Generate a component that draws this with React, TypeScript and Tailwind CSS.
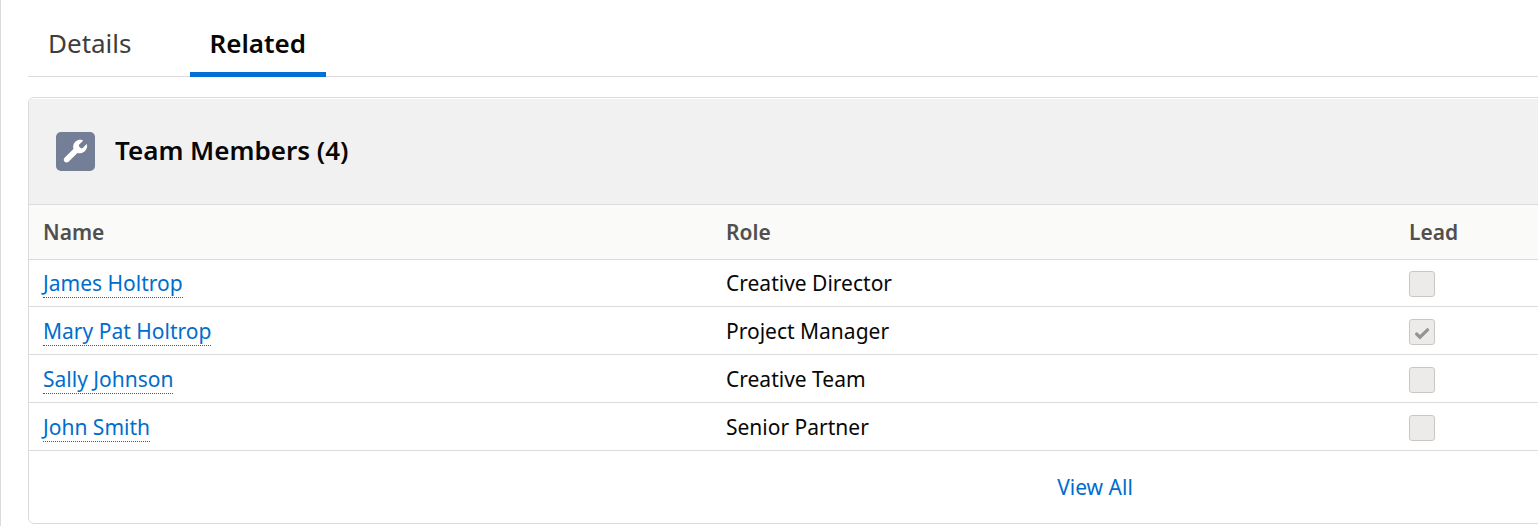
type Member = { name: string; role: string; lead: boolean };

const members: Member[] = [
  { name: 'James Holtrop', role: 'Creative Director', lead: false },
  { name: 'Mary Pat Holtrop', role: 'Project Manager', lead: true },
  { name: 'Sally Johnson', role: 'Creative Team', lead: false },
  { name: 'John Smith', role: 'Senior Partner', lead: false },
];

function WrenchIcon() {
  return (
    <span className="flex size-[39px] shrink-0 items-center justify-center rounded-[5px] bg-[#747e96]">
      <svg viewBox="0 0 39 39" className="size-full" aria-hidden="true">
        <path
          fill="#fff"
          d="M26.600 8.200C22.400 6.700 17.700 9.600 17.200 14c-.1 1 0 2 .2 2.900L8.600 25.700c-1.100 1.100-1.100 2.900 0 4s2.900 1.100 4 0l8.800-8.800c.9.3 1.900.4 2.900.3 4.400-.3 7.500-4.600 6.700-8.500-.1-.5-.6-.6-.9-.2l-3.100 3.300c-.7.7-1.900.7-2.600 0l-.9-.9c-.7-.7-.7-1.900 0-2.600l3.300-3.200c.3-.3.2-.8-.2-.9Z"
        />
      </svg>
    </span>
  );
}

function LeadCheckbox({ member }: { member: Member }) {
  return (
    <span className="relative mt-0.5 block size-[26px]">
      <input
        type="checkbox"
        aria-label={`${member.name} is lead`}
        checked={member.lead}
        disabled
        readOnly
        className="block size-full appearance-none rounded-[3px] border border-[#c9c7c5] bg-[#ecebea]"
      />
      {member.lead && (
        <svg viewBox="0 0 26 26" className="pointer-events-none absolute inset-0" aria-hidden="true">
          <path d="M7.600 15l3.400 3.200L18.500 10.800" fill="none" stroke="#969492" strokeWidth="3.200" strokeLinecap="round" />
        </svg>
      )}
    </span>
  );
}

export default function App() {
  return (
    <div className="min-h-screen overflow-x-hidden border-l border-[#dddbda] bg-white pl-[27px] font-['Noto_Sans','Open_Sans',sans-serif] text-[21px] leading-7 text-[#080707]">
      <div className="-mr-[624px] pb-[2px]">
        <div role="tablist" className="flex h-[77px] gap-[38px] border-b border-[#dddbda] text-[26px]">
          <button role="tab" aria-selected="false" className="px-5 pt-2.5 text-[#3e3e3c]">
            Details
          </button>
          <button
            role="tab"
            aria-selected="true"
            className="-mb-px border-b-[5px] border-[#0070d2] px-5 pt-3.5 font-semibold"
          >
            Related
          </button>
        </div>

        <section className="mt-5 overflow-hidden rounded-md border border-[#dddbda]">
          <header className="flex h-[106px] items-center gap-5 border-t border-white bg-[#f1f1f1] px-[27px]">
            <WrenchIcon />
            <h2 className="pb-1 text-[26px] font-semibold">Team Members (4)</h2>
          </header>

          <table className="w-full table-fixed border-separate border-spacing-0 text-left">
            <thead className="bg-[#fafaf9] text-[#514f4d]">
              <tr className="h-14">
                <th className="border-y border-[#dddbda] px-3.5 font-semibold">Name</th>
                <th className="border-y border-[#dddbda] px-3.5 font-semibold">Role</th>
                <th className="border-y border-[#dddbda] px-3.5 font-semibold">Lead</th>
                <td className="w-[83px] border-y border-[#dddbda]" />
              </tr>
            </thead>
            <tbody>
              {members.map((member) => (
                <tr key={member.name} className="h-12 first:h-[47px]">
                  <td className="border-b border-[#dddbda] px-3.5">
                    <a
                      href="#"
                      className="mt-px inline-block border-b border-dotted border-[#006dcc] align-top leading-7 text-[#006dcc]"
                    >
                      {member.name}
                    </a>
                  </td>
                  <td className="border-b border-[#dddbda] px-3.5">{member.role}</td>
                  <td className="border-b border-[#dddbda] px-3.5">
                    <LeadCheckbox member={member} />
                  </td>
                  <td className="border-b border-[#dddbda]" />
                </tr>
              ))}
            </tbody>
          </table>

          <footer className="flex h-[72px] items-center justify-center">
            <a href="#" className="text-[#006dcc]">
              View All
            </a>
          </footer>
        </section>
      </div>
    </div>
  );
}
